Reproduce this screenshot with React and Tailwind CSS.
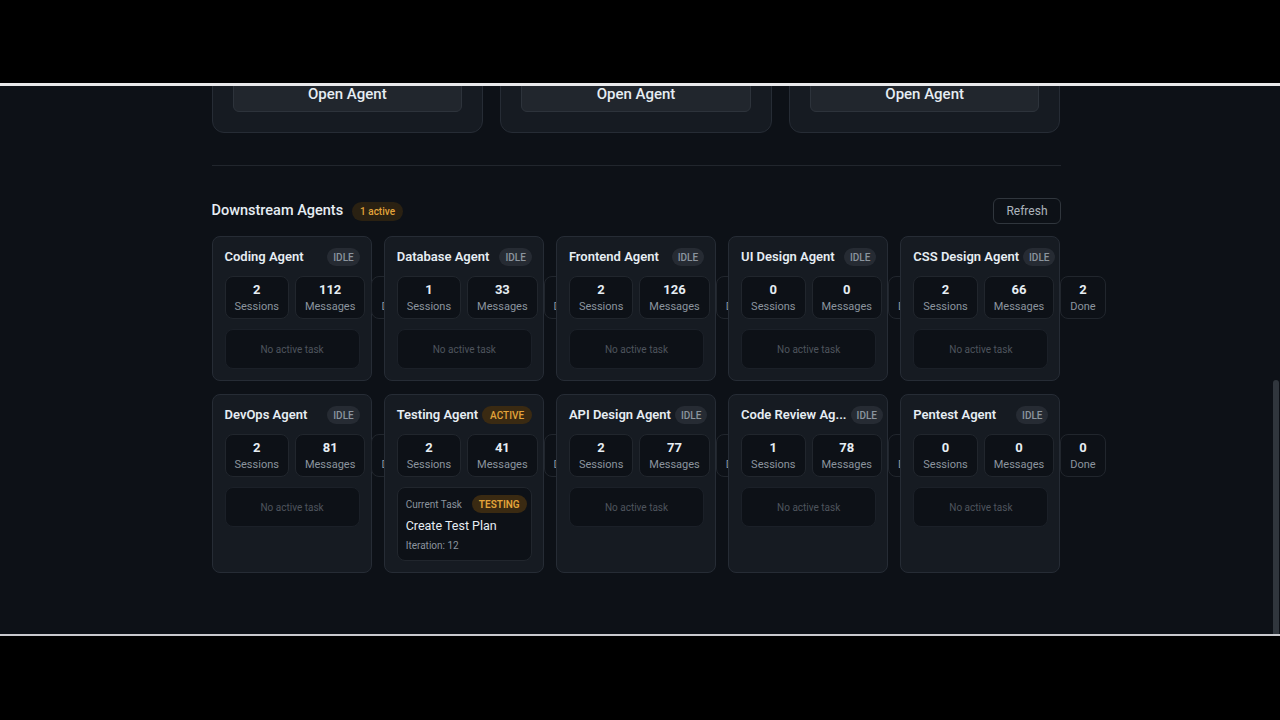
const topAgents = [
  { name: 'Orchestrator', desc: 'Coordinates downstream agents' },
  { name: 'Planner', desc: 'Breaks work into tasks' },
  { name: 'Reviewer', desc: 'Checks finished work' },
];

const agents = [
  { name: 'Coding Agent', sessions: 2, messages: 112, done: 0 },
  { name: 'Database Agent', sessions: 1, messages: 33, done: 0 },
  { name: 'Frontend Agent', sessions: 2, messages: 126, done: 1 },
  { name: 'UI Design Agent', sessions: 0, messages: 0, done: 0 },
  { name: 'CSS Design Agent', sessions: 2, messages: 66, done: 2 },
  { name: 'DevOps Agent', sessions: 2, messages: 81, done: 1 },
  { name: 'Testing Agent', sessions: 2, messages: 41, done: 0, active: true, task: { title: 'Create Test Plan', phase: 'TESTING', iteration: 12 } },
  { name: 'API Design Agent', sessions: 2, messages: 77, done: 1 },
  { name: 'Code Review Ag...', sessions: 1, messages: 78, done: 0 },
  { name: 'Pentest Agent', sessions: 0, messages: 0, done: 0 },
];

function Stat({ value, label }) {
  return (
    <div className="shrink-0 flex flex-col items-center px-[9px] pt-1 pb-1 rounded-lg bg-[#0d1117] border border-[#21262d]">
      <span className="text-[13px] font-bold leading-[18px] text-[#e6edf3]">{value}</span>
      <span className="text-[11px] leading-[15px] text-[#8b949e]">{label}</span>
    </div>
  );
}

function AgentCard({ agent }) {
  return (
    <div className="flex flex-col gap-[10px] p-[11px] pl-3 rounded-lg bg-[#161b22] border border-[#262c35]">
      <div className="flex items-center justify-between gap-1 h-[18px]">
        <span className="text-[13px] font-semibold text-[#e6edf3] whitespace-nowrap">{agent.name}</span>
        {agent.active ? (
          <span className="px-2 h-[18px] flex items-center rounded-full bg-[#3a2a12] text-[10px] font-medium text-[#e3a43a]">ACTIVE</span>
        ) : (
          <span className="px-[6px] h-[18px] flex items-center rounded-full bg-[#262b33] text-[10px] font-medium text-[#8b949e]">IDLE</span>
        )}
      </div>
      <div className="flex gap-[6px]">
        <Stat value={agent.sessions} label="Sessions" />
        <Stat value={agent.messages} label="Messages" />
        <Stat value={agent.done} label="Done" />
      </div>
      {agent.task ? (
        <div className="flex flex-col px-2 pt-[7px] pb-[7px] rounded-lg bg-[#0d1117] border border-[#21262d]">
          <div className="flex items-center gap-[10px] h-[18px]">
            <span className="text-[10px] text-[#8b949e] whitespace-nowrap">Current Task</span>
            <span className="px-[7px] h-[18px] flex items-center rounded-full bg-[#3a2a12] text-[10px] font-semibold text-[#e3a43a]">{agent.task.phase}</span>
          </div>
          <span className="mt-[4px] text-[12.5px] leading-[18px] text-[#e6edf3]">{agent.task.title}</span>
          <span className="mt-[4px] text-[10px] leading-[14px] text-[#8b949e]">Iteration: {agent.task.iteration}</span>
        </div>
      ) : (
        <div className="h-[40px] flex items-center justify-center rounded-lg bg-[#0d1117] border border-[#1b2028]">
          <span className="text-[10px] text-[#4d545d]">No active task</span>
        </div>
      )}
    </div>
  );
}

export default function App() {
  const font = { fontFamily: 'Roboto, "Noto Sans", sans-serif' };
  return (
    <div className="w-[1280px] h-[720px] flex flex-col bg-black" style={font}>
      <div className="h-[83px] shrink-0 bg-black" />
      <div className="h-[3px] shrink-0 bg-[#e8e8ea]" />
      <div className="h-[548px] shrink-0 flex bg-[#0d1117] overflow-hidden">
        <div className="flex-1 flex flex-col justify-end overflow-hidden">
          <div className="w-[849px] mx-auto shrink-0 pb-[61px]">
            {/* primary agents, mostly scrolled out of view */}
            <div className="grid grid-cols-3 gap-[17px]">
              {topAgents.map(a => (
                <div key={a.name} className="flex flex-col gap-4 px-5 pt-5 pb-[20px] rounded-xl bg-[#161b22] border border-[#262c35]">
                  <span className="text-[15px] font-semibold text-[#e6edf3]">{a.name}</span>
                  <span className="text-xs text-[#8b949e]">{a.desc}</span>
                  <button className="h-[36px] rounded-md bg-[#21262d] border border-[#2d333b] text-[15px] font-medium text-[#e6edf3]">
                    Open Agent
                  </button>
                </div>
              ))}
            </div>

            <div className="mt-[32px] h-px bg-[#21262d]" />

            <div className="mt-[32px] mb-[12px] flex items-center justify-between">
              <div className="flex items-center gap-[9px]">
                <h2 className="text-[14.5px] font-medium text-[#e6edf3]">Downstream Agents</h2>
                <span className="px-[8px] h-[19px] flex items-center rounded-full bg-[#2a2112] text-[10px] font-medium text-[#e3a43a]">1 active</span>
              </div>
              <button className="h-[26px] px-3 rounded-md border border-[#30363d] text-[12px] text-[#adb5bd]">Refresh</button>
            </div>

            <div className="grid grid-cols-5 gap-x-[12px] gap-y-[13px]">
              {agents.map(a => <AgentCard key={a.name} agent={a} />)}
            </div>
          </div>
        </div>
        <div className="w-2 shrink-0 flex flex-col justify-end pl-[1px] pr-[1px]">
          <div className="h-[254px] rounded-t-[3px] bg-[#30363d]" />
        </div>
      </div>
      <div className="h-[2px] shrink-0 bg-[#c9c9ce]" />
      <div className="flex-1 bg-black" />
    </div>
  );
}
